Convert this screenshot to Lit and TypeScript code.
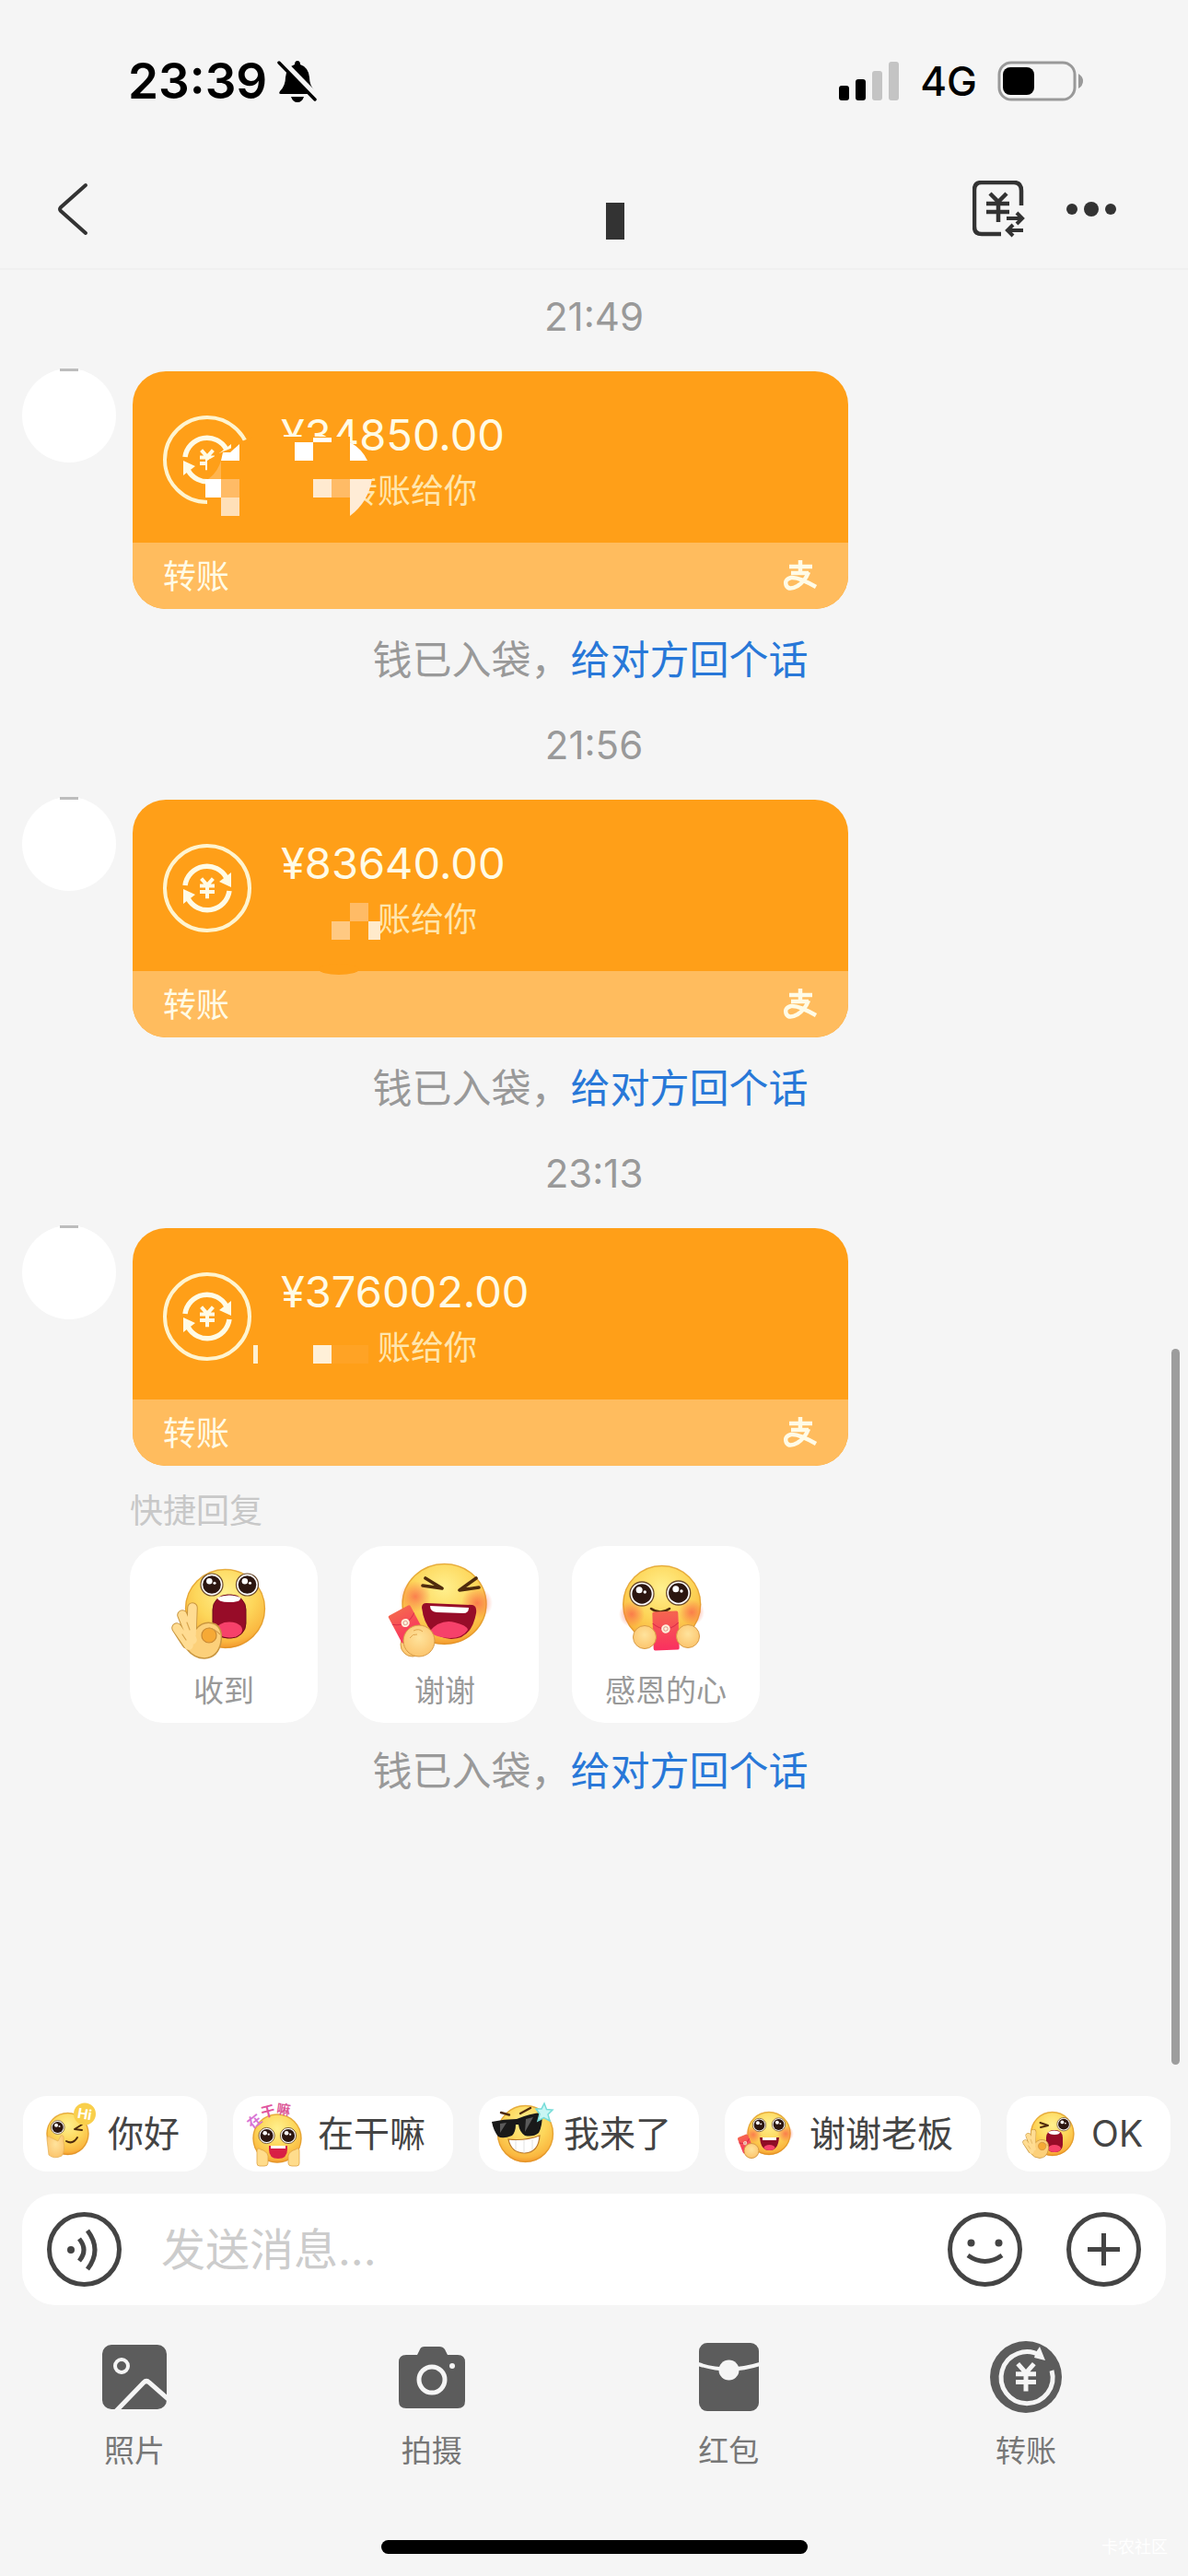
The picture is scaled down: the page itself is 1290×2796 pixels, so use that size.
import { LitElement, html, svg, css } from "lit";
import { customElement, property } from "lit/decorators.js";

const yen = (x: number, y: number, s: number, w: number, color: string) => svg`
  <path d="M${x - 8 * s} ${y - 13 * s}L${x} ${y - 4 * s}L${x + 8 * s} ${y - 13 * s}M${x - 10 * s} ${y - 3 * s}H${x + 10 * s}M${x - 10 * s} ${y + 5 * s}H${x + 10 * s}M${x} ${y - 4 * s}V${y + 14 * s}"
    fill="none" stroke=${color} stroke-width=${w} />`;

const eye = (x: number, y: number, r: number) => svg`
  <circle cx=${x} cy=${y} r=${r} fill="#fff" stroke="#6a4a2c" stroke-width=${r * 0.1} />
  <circle cx=${x} cy=${y} r=${r * 0.82} fill="#2c1610" />
  <circle cx=${x - r * 0.22} cy=${y - r * 0.32} r=${r * 0.27} fill="#fff" />
  <circle cx=${x + r * 0.25} cy=${y - r * 0.15} r=${r * 0.13} fill="#fff" />`;

const face = (x: number, y: number, rx: number, ry: number) => svg`
  <ellipse cx=${x} cy=${y} rx=${rx} ry=${ry} fill="url(#skin)" />
  <ellipse cx=${x} cy=${y} rx=${rx - 0.5} ry=${ry - 0.5} fill="none" stroke="#d98d1e" stroke-opacity=".6" stroke-width="1.4" />`;

const blush = (x: number, y: number, r: number) => svg`<circle cx=${x} cy=${y} r=${r} fill="url(#blush)" />`;

const fist = (x: number, y: number, r: number) => svg`
  <circle cx=${x} cy=${y} r=${r} fill="url(#hand)" stroke="#d89b45" stroke-width="1" />`;

const packet = (x: number, y: number, w: number, h: number, angle: number) => svg`
  <g transform="translate(${x} ${y}) rotate(${angle})">
    <rect x=${-w / 2} y=${-h / 2} width=${w} height=${h} rx="2" fill="url(#packet)" />
    <path d="M${-w / 2} ${-h / 5}Q0 ${h / 10} ${w / 2} ${-h / 5}" fill="none" stroke="#d9304a" stroke-width="1" />
    <circle cx="0" cy=${-h * 0.05} r=${w * 0.17} fill="#fff0dc" />
    <circle cx="0" cy=${-h * 0.05} r=${w * 0.08} fill="none" stroke="#e0a090" stroke-width="1" />
  </g>`;

const okHand = (x: number, y: number, s: number) => svg`
  <g transform="translate(${x} ${y}) scale(${s})">
    <path d="M-28 -9L-17 8M-22 -23L-13 0M-11 -31L-12 -8" fill="none" stroke="#c9963f" stroke-width="11.500" stroke-linecap="round" />
    <path d="M-25 2L-17 14Q-9 24 2 24Q17 23 20 6Q22 -8 14 -13Q2 -18 -7 -8L-13 -8Z" fill="#fcd07a" stroke="#c9963f" stroke-width="1.500" />
    <path d="M-28 -9L-15 10M-22 -23L-11 4M-11 -31L-12 -2" fill="none" stroke="#ffdc92" stroke-width="9.500" stroke-linecap="round" />
    <path d="M-17 -15L-14 -7M-22 -2L-18 4" fill="none" stroke="#d9a650" stroke-width="1.200" stroke-linecap="round" />
    <circle cx="7" cy="-1" r="8" fill="#f6a935" stroke="#c98a35" stroke-width="1.200" />
    <path d="M7 -9Q13 -8 19 -2" fill="none" stroke="#d39a48" stroke-width="1.200" />
  </g>`;

const EMOJI: Record<string, { box: string; art: unknown }> = {
  received: {
    box: "0 0 110 110",
    art: svg`<g transform="translate(-5 0)">
      ${face(61.5, 52, 43.5, 43)}
      ${eye(47, 26, 12)}${eye(85.5, 26, 12)}
      <rect x="48" y="37" width="36" height="47" rx="16" fill="#970c28" stroke="#6d0a1c" stroke-width="1" />
      <ellipse cx="66" cy="75" rx="14" ry="8.5" fill="#f6416a" />
      <path d="M53 40Q66 35 78 40Q79 45 66 45Q53 45 53 40Z" fill="#fff" />
      ${okHand(37, 82, 1)}
    </g>`,
  },
  thanks: {
    box: "0 0 110 110",
    art: svg`<g transform="translate(-8 0)">
      ${face(62.5, 47, 46, 44)}
      ${blush(31, 39, 17)}${blush(98, 46, 17)}
      <path d="M42 19L60 30L39 27M97 19L79 32L100 29" fill="none" stroke="#4f2b0d" stroke-width="3.6" stroke-linejoin="round" stroke-linecap="round" />
      <path d="M38 51Q38 46 43 46L93 48Q98 49 97 57Q92 85 70 85Q42 83 38 51Z" fill="#970c28" />
      <path d="M46 77Q58 63 74 67Q87 70 88 75Q82 84 69 84Q54 84 46 77Z" fill="#f6416a" />
      <path d="M47 49L89 51Q89 57 83 57L54 56Q47 55 47 49Z" fill="#fff" />
      ${fist(28, 91, 13)}
      ${packet(21, 69, 27, 34, -28)}
      ${fist(35, 87, 17)}
      <path d="M25 84Q28 79 33 80M29 76Q35 73 39 77" fill="none" stroke="#e0a44c" stroke-width="1" />
    </g>`,
  },
  grateful: {
    box: "0 0 110 110",
    art: svg`<g transform="translate(4 0)">
      ${face(46.7, 47.5, 42.5, 42.5)}
      ${blush(14, 58, 14)}${blush(79, 56, 14)}
      ${eye(25, 36, 13)}${eye(64.7, 35, 13)}
      <path d="M35 52Q45 59 55 52" fill="none" stroke="#4f2b0d" stroke-width="2.6" stroke-linecap="round" />
      ${packet(51, 76, 28, 42, -2)}
      ${fist(28, 83, 12.5)}${fist(75, 82, 12.5)}
    </g>`,
  },
  hi: {
    box: "0 0 68 72",
    art: svg`
      ${face(36.5, 36, 23, 23)}
      ${eye(25.7, 29, 7.4)}
      <path d="M52 26L44 31L52 32" fill="none" stroke="#4f2b0d" stroke-width="2" stroke-linecap="round" stroke-linejoin="round" />
      <path d="M35 44Q42 48 47 40" fill="none" stroke="#4f2b0d" stroke-width="2" stroke-linecap="round" />
      <path d="M14 42Q14 37 18 40L26 44L29 38Q33 36 32 44Q34 54 30 60Q22 64 16 59Z" fill="url(#hand)" stroke="#e6b25c" stroke-width=".8" />
      <circle cx="55" cy="14.5" r="12" fill="#f9cf4b" />
      <text x="55" y="20" text-anchor="middle" class="hi" transform="rotate(10 55 14)">Hi</text>`,
  },
  what: {
    box: "0 0 68 72",
    art: svg`
      ${face(36, 41, 26.5, 26.5)}
      ${eye(24.6, 38, 8.6)}${eye(48, 38, 8.6)}
      <path d="M27 49H47V53Q47 63 37 63Q27 63 27 53Z" fill="#d81f45" />
      <path d="M29 49H45V52H29Z" fill="#fff" />
      <path d="M14 55Q14 50 18 53Q25 55 26 60V68Q26 71 22 71H17Q14 71 14 68ZM60 55Q60 50 56 53Q49 55 48 60V68Q48 71 52 71H57Q60 71 60 68Z" fill="#ffdc8c" stroke="#dfa548" stroke-width=".8" />
      <text x="11" y="28" text-anchor="middle" class="arc" fill="#d873d4" transform="rotate(-38 11 22)">在</text>
      <text x="26" y="17" text-anchor="middle" class="arc" fill="#e0559f" transform="rotate(-14 26 12)">干</text>
      <text x="43" y="15" text-anchor="middle" class="arc" fill="#dc5a98" transform="rotate(8 43 10)">嘛</text>`,
  },
  coming: {
    box: "0 0 68 72",
    art: svg`
      ${face(38.5, 36, 30.5, 31)}
      <path d="M12 13L21 15.500M33 14L44 8" stroke="#4f2b0d" stroke-width="2.4" stroke-linecap="round" />
      <path d="M20 42Q38 44 54 38Q53 56 38 57Q23 57 20 42Z" fill="#fff" stroke="#b9772a" stroke-width="1.2" />
      <path d="M28 43V54M37 43V57M46 42V54" stroke="#d9d9d9" stroke-width=".8" />
      <path d="M2 23Q15 20 29 20Q43 14 57 13Q57 28 53 35Q47 40 38 38Q32 34 31 26H28Q28 34 24 38Q14 42 9 39Q4 33 2 23Z" fill="#191919" />
      <path d="M11 25L18 24L11 35ZM39 20L47 18L38 34Z" fill="#6a6a6a" opacity=".8" />
      <path d="M59 3L61.500 9.500L68 10L63 15L65 22L58.500 18.500L52 22L54 14.500L50 9L56 9Z" fill="#c9f6f4" stroke="#76dcd8" stroke-width="1.5" />`,
  },
  boss: {
    box: "0 0 68 72",
    art: svg`
      ${face(36, 35.5, 23.5, 23.5)}
      ${blush(19, 37, 9)}${blush(54, 36, 9)}
      ${eye(25.5, 26.5, 7.2)}${eye(46.5, 26, 7.2)}
      <path d="M26 40H47Q46 54 36.500 54Q27 54 26 40Z" fill="#8f0d26" />
      <path d="M29 40H44V43H29Z" fill="#fff" />
      <ellipse cx="36.500" cy="51" rx="6" ry="3" fill="#f6416a" />
      ${packet(10.5, 47, 12, 19, -22)}
      ${fist(17, 54.5, 8)}`,
  },
  ok: {
    box: "0 0 68 72",
    art: svg`
      ${face(37.7, 36, 23.7, 24)}
      <path d="M24.500 24L33 27L25 29" fill="none" stroke="#4f2b0d" stroke-width="2" stroke-linecap="round" stroke-linejoin="round" />
      ${eye(50, 25.7, 7.2)}
      <rect x="31" y="32" width="18" height="24" rx="8" fill="#970c28" />
      <ellipse cx="40" cy="52" rx="7" ry="4" fill="#f6416a" />
      <path d="M33 34Q40 31 46 34Q46 37 40 37Q34 37 33 34Z" fill="#fff" />
      ${okHand(23, 50, 0.52)}`,
  },
};

@customElement("chat-emoji")
export class ChatEmoji extends LitElement {
  @property() name = "received";
  static styles = css`
    :host { display: block; }
    svg { display: block; width: 100%; height: 100%; overflow: visible; }
    .hi { font: 700 15px Inter, sans-serif; fill: #fff; }
    .arc { font: 700 15px "Noto Sans CJK SC", sans-serif; }
  `;
  render() {
    const e = EMOJI[this.name];
    return html`<svg viewBox=${e.box} aria-hidden="true">
      <defs>
        <radialGradient id="skin" cx=".5" cy=".3" r=".75">
          <stop offset="0" stop-color="#fff08e" /><stop offset=".5" stop-color="#fdd65a" />
          <stop offset=".82" stop-color="#fab740" /><stop offset="1" stop-color="#ee8422" />
        </radialGradient>
        <radialGradient id="blush"><stop offset="0" stop-color="#fa6a4a" stop-opacity=".8" /><stop offset="1" stop-color="#fa6a4a" stop-opacity="0" /></radialGradient>
        <radialGradient id="hand" cx=".5" cy=".4" r=".7"><stop offset="0" stop-color="#ffe39c" /><stop offset="1" stop-color="#fbc066" /></radialGradient>
        <linearGradient id="packet" x1="0" y1="0" x2="0" y2="1"><stop offset="0" stop-color="#f5664f" /><stop offset="1" stop-color="#fa2f60" /></linearGradient>
      </defs>
      ${e.art}
    </svg>`;
  }
}

/* Redaction patches, in the coordinates of the card's upper half. */
const PATCHES = [
  svg`
    <path d="M81 97L96 88L106 84L116 77L131 71H236V77Q251 87 255 97L260 117Q253 142 236 157H81Z" fill="#ff9f18" />
    <path d="M82 117Q92 110 96 97V117Z" fill="#ffb550" />
    <path d="M98 88L106 88L116 79V97H96Z" fill="#fff" />
    <path d="M79 117H96V137H79ZM176 77H196V97H176ZM196 72H216V77H196Z" fill="#fff" />
    <path d="M96 117H116V137H96ZM216 117H236V137H216Z" fill="#ffbb66" />
    <path d="M96 137H116V157H96Z" fill="#ffe0b8" />
    <path d="M196 117H216V137H196Z" fill="#ffead0" />
    <path d="M236 77Q249 84 255 97H236Z" fill="#fff" />
    <path d="M236 117H260Q256 142 236 157Z" fill="#ffecd6" />`,
  svg`
    <path d="M236 112H256V132H236Z" fill="#ffbb66" />
    <path d="M216 132H236V152H216Z" fill="#ffc982" />
    <path d="M256 132H269V152H256Z" fill="#ffeacb" />
    <ellipse cx="224" cy="184" rx="22" ry="6" fill="#ff9f18" />`,
  svg`
    <path d="M131 127H136V147H131Z" fill="#fff0d0" />
    <path d="M196 127H216V147H196Z" fill="#fff0d8" />
    <path d="M216 127H256V147H216Z" fill="#ffa325" />`,
];

@customElement("transfer-card")
export class TransferCard extends LitElement {
  @property() amount = "";
  @property() note = "";
  @property({ type: Number }) patch = 0;
  static styles = css`
    :host { display: block; }
    .card {
      display: flex; flex-direction: column; width: 100%; border: 0; padding: 0; border-radius: 36px; overflow: hidden;
      background: #ff9f18; color: #fffbe6; text-align: left; font-family: inherit; position: relative;
    }
    .top { display: flex; align-items: center; gap: 32px; height: 180px; padding: 6px 33px 0; }
    .coin { width: 96px; height: 96px; flex: none; }
    .lines { display: flex; flex-direction: column; gap: 14px; flex: 1; }
    .amount { font-size: 47px; line-height: 54px; }
    .note { font-size: 36px; line-height: 40px; color: #ffe6ae; padding-left: 69px; }
    .note.short { padding-left: 105px; }
    .foot { display: flex; align-items: center; justify-content: space-between; align-self: stretch; height: 68px; padding: 0 33px 4px; background: #ffbc5e; font-size: 36px; }
    .pay { width: 38px; height: 34px; margin-top: 4px; }
    .patches { position: absolute; left: 0; top: 0; width: 777px; height: 192px; }
  `;
  render() {
    return html`<button class="card">
      <span class="top">
        <svg class="coin" viewBox="0 0 96 96" fill="none" aria-hidden="true">
          <circle cx="48" cy="48" r="46" stroke="#fff4cf" stroke-width="4" />
          <path d="M24 45A24 24 0 0 1 69 37M72 51A24 24 0 0 1 27 59" stroke="#fffbe6" stroke-width="5.500" />
          <path d="M74 31V47L61 41ZM22 65V49L35 55Z" fill="#fffbe6" />
          ${yen(48, 48, 0.8, 4, "#fffbe6")}
        </svg>
        <span class="lines">
          <span class="amount">${this.amount}</span>
          <span class="note ${this.note.length < 4 ? "short" : ""}">${this.note}</span>
        </span>
      </span>
      <span class="foot">
        <span>转账</span>
        <svg class="pay" viewBox="0 0 38 34" fill="none" stroke="#fffbe6" aria-hidden="true">
          <path d="M7 7H32M19 0V14M9 14H28" stroke-width="4.500" />
          <path d="M28 13Q24 23 16 28Q7 33 4 28Q1 21 9 19Q17 18 36 29" stroke-width="4.500" />
        </svg>
      </span>
      <svg class="patches" viewBox="0 0 777 192" aria-hidden="true">${PATCHES[this.patch]}</svg>
    </button>`;
  }
}

const TRANSFERS = [
  { time: "21:49", amount: "¥34850.00", note: "转账给你" },
  { time: "21:56", amount: "¥83640.00", note: "账给你" },
  { time: "23:13", amount: "¥376002.00", note: "账给你" },
];
const QUICK = [
  { emoji: "received", label: "收到" },
  { emoji: "thanks", label: "谢谢" },
  { emoji: "grateful", label: "感恩的心" },
];
const CHIPS = [
  { emoji: "hi", label: "你好" },
  { emoji: "what", label: "在干嘛" },
  { emoji: "coming", label: "我来了" },
  { emoji: "boss", label: "谢谢老板" },
  { emoji: "ok", label: "OK" },
];
const TOOLS = [
  {
    label: "照片",
    art: svg`<rect x="4" y="5" width="70" height="70" rx="10" fill="#5c5c5c" />
      <circle cx="25" cy="28" r="7" fill="none" stroke="#f5f5f5" stroke-width="4" />
      <path d="M18 78L49 46Q52 43 55 46L78 66" fill="none" stroke="#f5f5f5" stroke-width="5" />`,
  },
  {
    label: "拍摄",
    art: svg`<path d="M11 16H23L26 10Q27 7 31 7H47Q51 7 53 10L56 16H67Q75 16 75 24V66Q75 74 67 74H11Q3 74 3 66V24Q3 16 11 16Z" fill="#5c5c5c" />
      <circle cx="39" cy="43" r="14" fill="none" stroke="#f5f5f5" stroke-width="5" />
      <circle cx="61" cy="28" r="3" fill="#f5f5f5" />`,
  },
  {
    label: "红包",
    art: svg`<rect x="7" y="3" width="65" height="74" rx="9" fill="#5c5c5c" />
      <path d="M6 26Q39 37 73 26" fill="none" stroke="#f5f5f5" stroke-width="4" />
      <circle cx="39.500" cy="32.500" r="11" fill="#f5f5f5" />`,
  },
  {
    label: "转账",
    art: svg`<circle cx="39" cy="40" r="39" fill="#5c5c5c" />
      <path d="M55 17A28 28 0 1 0 67 33" fill="none" stroke="#f5f5f5" stroke-width="5" />
      <path d="M50 13L54 7L60 22L48 19Z" fill="#f5f5f5" />
      ${yen(39, 40, 1.1, 5, "#f5f5f5")}`,
  },
];

@customElement("app-root")
export class AppRoot extends LitElement {
  static styles = css`
    :host { display: block; font-family: Inter, "Noto Sans CJK SC", sans-serif; color: #333; }
    * { box-sizing: border-box; }
    svg { display: block; flex: none; }
    button { font-family: inherit; border: 0; padding: 0; margin: 0; background: none; color: inherit; }
    .page { display: flex; flex-direction: column; min-height: 100vh; background: #f5f5f5; overflow: hidden; }
    .status { display: flex; align-items: center; justify-content: space-between; height: 161px; padding: 14px 114px 0 139px; color: #000; }
    .clock { display: flex; align-items: center; gap: 11px; font-size: 53px; font-weight: 600; line-height: 54px; }
    .signals { display: flex; align-items: center; gap: 22px; font-size: 44px; font-weight: 500; line-height: 54px; }
    .nav { display: flex; align-items: center; justify-content: space-between; height: 132px; padding: 2px 78px 0 60px; border-bottom: 2px solid #f0f0f0; }
    .title { width: 20px; height: 40px; margin: 26px 0 0 183px; background: #333; }
    .actions { display: flex; align-items: center; gap: 44px; }
    .chat { position: relative; flex: 1; padding-top: 30px; }
    .list { display: flex; flex-direction: column; }
    .time { text-align: center; color: #999; font-size: 42px; line-height: 42px; margin-bottom: 38px; }
    .row { display: flex; align-items: flex-start; gap: 18px; padding: 0 24px; }
    .avatar { width: 102px; height: 102px; border-radius: 50%; background: #fff; flex: none; display: flex; justify-content: center; margin-top: -3px; }
    .mark { width: 20px; height: 3px; background: #bdbdbd; }
    .bubble { flex: 0 1 777px; }
    .reply { text-align: center; font-size: 43px; line-height: 50px; color: #999; margin: 30px 0 47px; padding-right: 8px; }
    .quick + .reply { margin-top: 27px; }
    .reply a { color: #2878d8; text-decoration: none; }
    .quick { padding: 31px 141px 0; }
    .quick h2 { margin: 0 0 20px; font-size: 36px; line-height: 36px; font-weight: 400; color: #c8c8c8; }
    .cards { display: flex; gap: 36px; }
    .qcard { display: flex; flex-direction: column; align-items: center; justify-content: space-between; width: 204px; height: 192px; padding: 16px 0 14px; border-radius: 36px; background: #fff; color: #999; font-size: 33px; line-height: 42px; }
    .qemoji { width: 110px; height: 110px; }
    .scroll { position: absolute; right: 9px; bottom: 9px; width: 9px; height: 777px; border-radius: 5px; background: #9d9d9d; }
    .dock { padding: 25px 0 24px; }
    .chips { display: flex; gap: 28px; padding: 0 25px; margin-bottom: 24px; }
    .chip { display: flex; align-items: center; gap: 12px; height: 82px; padding: 0 30px 0 12px; border-radius: 26px; background: #fff; color: #444; font-size: 39px; line-height: 48px; white-space: nowrap; flex: none; }
    .cemoji { width: 68px; height: 72px; }
    .bar { display: flex; align-items: center; height: 121px; margin: 0 24px; padding: 0 27px; border-radius: 36px; background: #fff; }
    .bar input { flex: 1; min-width: 0; margin: 0 43px; border: 0; padding: 0; outline: 0; background: none; font: 400 48px/60px Inter, "Noto Sans CJK SC", sans-serif; color: #333; }
    .bar input::placeholder { color: #ccc; opacity: 1; }
    .plus { margin-left: 48px; }
    .tools { display: flex; justify-content: space-between; padding: 38px 94px 0 64px; }
    .tool { display: flex; flex-direction: column; align-items: center; gap: 18px; width: 164px; font-size: 33px; line-height: 44px; color: #777; }
    .base { display: grid; grid-template-columns: 1fr 463px 1fr; align-items: center; height: 15px; margin-top: 75px; padding: 0 22px; }
    .home { grid-column: 2; height: 15px; border-radius: 8px; background: #000; }
    .brand { justify-self: end; font-size: 18px; line-height: 15px; color: #fff; }
  `;

  private reply() {
    return html`<div class="reply">钱已入袋，<a href="#reply">给对方回个话</a></div>`;
  }

  render() {
    return html`<div class="page">
      <div class="status">
        <div class="clock">
          <span>23:39</span>
          <svg width="44" height="46" viewBox="0 0 44 46" aria-hidden="true">
            <path d="M22 1Q25 1 25 5Q34 8 35 19Q35 28 41 34Q43 37 40 37H4Q1 37 3 34Q9 28 9 19Q10 8 19 5Q19 1 22 1ZM15 40H29Q27 46 22 46Q17 46 15 40Z" fill="#000" />
            <path d="M3 0L44 42" stroke="#f5f5f5" stroke-width="8" />
            <path d="M2 3L41 43" stroke="#000" stroke-width="3.500" stroke-linecap="round" />
          </svg>
        </div>
        <div class="signals">
          <svg width="66" height="42" viewBox="0 0 66 42" aria-hidden="true">
            <rect x="0" y="26" width="11" height="16" rx="3" /><rect x="18" y="19" width="11" height="23" rx="3" />
            <rect x="36" y="10" width="11" height="32" rx="3" fill="#c4c4c4" /><rect x="54" y="0" width="11" height="42" rx="3" fill="#c4c4c4" />
          </svg>
          <span>4G</span>
          <svg width="93" height="44" viewBox="0 0 93 44" aria-hidden="true">
            <rect x="2" y="2" width="82" height="40" rx="13" fill="none" stroke="#999" stroke-width="3" />
            <rect x="6" y="7" width="34" height="30" rx="8" /><path d="M88 14Q93 17 93 22Q93 27 88 30Z" fill="#999" />
          </svg>
        </div>
      </div>
      <div class="nav">
        <button aria-label="返回">
          <svg width="36" height="58" viewBox="0 0 36 58"><path d="M33 3L6 27Q4 29 6 31L33 55" fill="none" stroke="#333" stroke-width="4" stroke-linecap="round" /></svg>
        </button>
        <div class="title"></div>
        <div class="actions">
          <button aria-label="转账记录">
            <svg width="58" height="62" viewBox="0 0 58 62" fill="none" stroke="#333">
              <path d="M53 27V11Q53 2 45 2H10Q2 2 2 10V50Q2 58 10 58H31" stroke-width="4.500" />
              <path d="M19 14L28 23L37 14M15 25H40M15 34H40M28 23V45" stroke-width="4.500" />
              <path d="M37 41H55M48 35L54 41L48 47M55 54H38M44 48L38 54L44 60" stroke-width="4" />
            </svg>
          </button>
          <button aria-label="更多">
            <svg width="54" height="18" viewBox="0 0 54 18" fill="#333"><circle cx="6" cy="9" r="6" /><circle cx="27" cy="9" r="8" /><circle cx="48" cy="9" r="6" /></svg>
          </button>
        </div>
      </div>
      <main class="chat">
        <div class="list">
          ${TRANSFERS.map(
            (t, i) => html`
              <div class="time">${t.time}</div>
              <div class="row">
                <div class="avatar"><span class="mark"></span></div>
                <transfer-card class="bubble" .amount=${t.amount} .note=${t.note} .patch=${i}></transfer-card>
              </div>
              ${i === 2
                ? html`<section class="quick">
                    <h2>快捷回复</h2>
                    <div class="cards">
                      ${QUICK.map((q) => html`<button class="qcard"><chat-emoji class="qemoji" name=${q.emoji}></chat-emoji>${q.label}</button>`)}
                    </div>
                  </section>`
                : ""}
              ${this.reply()}
            `
          )}
        </div>
        <div class="scroll"></div>
      </main>
      <div class="dock">
        <div class="chips">
          ${CHIPS.map((c) => html`<button class="chip"><chat-emoji class="cemoji" name=${c.emoji}></chat-emoji>${c.label}</button>`)}
        </div>
        <div class="bar">
          <button aria-label="语音">
            <svg width="81" height="81" viewBox="0 0 81 81" fill="none" stroke="#444" stroke-width="5">
              <circle cx="40.500" cy="40.500" r="38" />
              <circle cx="26" cy="41" r="4" fill="#444" stroke="none" />
              <path d="M35 29Q45 41 35 53M44 20Q60 41 44 62" />
            </svg>
          </button>
          <input type="text" aria-label="发送消息" placeholder="发送消息..." />
          <button aria-label="表情">
            <svg width="81" height="81" viewBox="0 0 81 81" fill="none" stroke="#444" stroke-width="5">
              <circle cx="40.500" cy="40.500" r="38" />
              <circle cx="25.500" cy="33.500" r="4" fill="#444" stroke="none" /><circle cx="55.500" cy="33.500" r="4" fill="#444" stroke="none" />
              <path d="M22 47Q40.500 60 59 47" />
            </svg>
          </button>
          <button class="plus" aria-label="更多功能">
            <svg width="81" height="81" viewBox="0 0 81 81" fill="none" stroke="#444" stroke-width="5">
              <circle cx="40.500" cy="40.500" r="38" /><path d="M23 40.500H58M40.500 23V58" />
            </svg>
          </button>
        </div>
        <div class="tools">
          ${TOOLS.map((t) => html`<button class="tool"><svg width="78" height="80" viewBox="0 0 78 80" aria-hidden="true">${t.art}</svg>${t.label}</button>`)}
        </div>
        <div class="base"><div class="home"></div><div class="brand">卡农社区</div></div>
      </div>
    </div>`;
  }
}
